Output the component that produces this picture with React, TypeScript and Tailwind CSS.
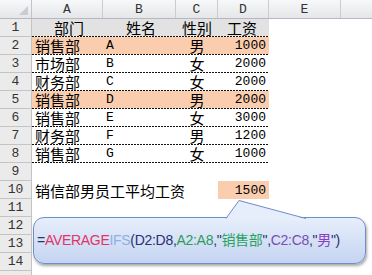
import React from "react";

type Row = {
  n: number;
  a?: string;
  b?: string;
  c?: string;
  d?: string;
  fill?: "head" | "peach" | "d";
  dashed?: boolean;
};

const rows: Row[] = [
  { n: 1, a: "部门", b: "姓名", c: "性别", d: "工资", fill: "head", dashed: true },
  { n: 2, a: "销售部", b: "A", c: "男", d: "1000", fill: "peach", dashed: true },
  { n: 3, a: "市场部", b: "B", c: "女", d: "2000", dashed: true },
  { n: 4, a: "财务部", b: "C", c: "女", d: "2000", dashed: true },
  { n: 5, a: "销售部", b: "D", c: "男", d: "2000", fill: "peach", dashed: true },
  { n: 6, a: "销售部", b: "E", c: "女", d: "3000", dashed: true },
  { n: 7, a: "财务部", b: "F", c: "男", d: "1200", dashed: true },
  { n: 8, a: "销售部", b: "G", c: "女", d: "1000", dashed: true },
  { n: 9 },
  { n: 10, a: "销信部男员工平均工资", d: "1500", fill: "d" },
  { n: 11 },
  { n: 12 },
  { n: 13 },
  { n: 14 },
];

const mono = { fontFamily: '"Liberation Mono", "Noto Sans CJK SC", monospace' };

// latin bits in a SimSun-ish narrow mono, cjk in Noto
function Txt({ s }: { s: string }) {
  const latin = /^[A-Za-z0-9]+$/.test(s);
  if (latin) return <span className="text-[13px] leading-none" style={mono}>{s}</span>;
  return <span className="text-[15px] leading-none">{s}</span>;
}

function ColHead({ label, w }: { label: string; w: string }) {
  return (
    <div
      className={`${w} h-full flex items-center justify-center border-r border-[#c9ccd1] text-[13px] leading-none text-[#333]`}
      style={mono}
    >
      {label}
    </div>
  );
}

function SheetRow({ r }: { r: Row }) {
  const head = r.fill === "head";
  const peach = r.fill === "peach";
  const bg = head ? "bg-[#e2e2e2]" : peach ? "bg-[#f9cdae]" : "bg-white";
  return (
    <div className="flex h-[18px] leading-none">
      <div
        className="w-[32px] shrink-0 flex items-center justify-center bg-[#ebebeb] border-r border-b border-[#c4c4c4] text-[13px] text-[#333]"
        style={mono}
      >
        {r.n}
      </div>
      <div className="w-[237px] shrink-0 flex flex-col">
        <div className={`flex flex-1 ${bg}`}>
          <div className="w-[71px] flex items-center pl-[3px] whitespace-nowrap overflow-visible z-10">
            {r.a && (head ? <span className="w-full text-center text-[15px] leading-none">{r.a}</span> : <Txt s={r.a} />)}
          </div>
          <div className={`w-[73px] flex items-center pl-[3px] ${head ? "justify-center" : ""}`}>
            {r.b && <Txt s={r.b} />}
          </div>
          <div className="w-[42px] flex items-center justify-center">{r.c && <Txt s={r.c} />}</div>
          <div
            className={`w-[51px] flex items-center pr-[3px] ${head ? "justify-center" : "justify-end"} ${
              r.fill === "d" ? "bg-[#f9cdae]" : ""
            }`}
          >
            {r.d && <Txt s={r.d} />}
          </div>
        </div>
        {r.dashed && (
          <div className="h-px w-full bg-[image:repeating-linear-gradient(to_right,#111_0px,#111_2px,transparent_2px,transparent_3px)]" />
        )}
      </div>
      <div className="flex-1 bg-white" />
    </div>
  );
}

export default function App() {
  return (
    <div
      className="relative w-[372px] h-[275px] overflow-hidden bg-white text-black"
      style={{ fontFamily: '"Noto Sans CJK SC", "Noto Sans", sans-serif' }}
    >
      {/* column headers */}
      <div className="flex h-[19px] bg-linear-to-b from-[#f7f8f9] to-[#e4e6e9] border-b border-[#b5b9be]">
        <div className="relative w-[32px] h-full border-r border-[#c4c4c4]">
          <div className="absolute right-[3px] bottom-[3px] w-0 h-0 border-l-[9px] border-l-transparent border-b-[9px] border-b-[#c9ccd0]" />
        </div>
        <ColHead label="A" w="w-[71px]" />
        <ColHead label="B" w="w-[73px]" />
        <ColHead label="C" w="w-[42px]" />
        <ColHead label="D" w="w-[51px]" />
        <ColHead label="E" w="w-[72px]" />
        <div className="flex-1" />
      </div>

      {rows.map((r) => (
        <SheetRow key={r.n} r={r} />
      ))}
      <div className="flex h-[6px]">
        <div className="w-[32px] bg-[#ebebeb] border-r border-[#c4c4c4]" />
      </div>

      {/* callout with the formula */}
      <div className="absolute left-[33px] top-[217px] w-[333px] h-[47px] rounded-[11px] border border-[#6f8dc6] bg-linear-to-b from-[#e7eefb] to-[#c4d4f1] shadow-[1px_2px_3px_rgba(0,0,0,0.35)] flex items-center pl-[3px]">
        <div className="text-[14px] tracking-[-0.3px] whitespace-nowrap" style={{ fontFamily: '"Liberation Sans", "Noto Sans CJK SC", sans-serif' }}>
          <span className="text-[#2a2f6e]">=</span>
          <span className="text-[#e23464]">AVERAGE</span>
          <span className="text-[#8db0e6]">IFS</span>
          <span className="text-[#2a2f6e]">(D2:D8,</span>
          <span className="text-[#2f9a5a]">A2:A8</span>
          <span className="text-[#2a2f6e]">,"</span>
          <span className="text-[#27a35d]">销售部</span>
          <span className="text-[#2a2f6e]">",</span>
          <span className="text-[#7a4cb4]">C2:C8</span>
          <span className="text-[#2a2f6e]">,"</span>
          <span className="text-[#8b3ec2]">男</span>
          <span className="text-[#2a2f6e]">")</span>
        </div>
      </div>
      <svg className="absolute left-0 top-0 pointer-events-none" width="372" height="275">
        <polygon points="226,219 239,200 306,219" fill="#e6edfb" />
        <polyline points="226,218.5 239,200.5 306,218.5" fill="none" stroke="#6f8dc6" strokeWidth="1" />
      </svg>
    </div>
  );
}
